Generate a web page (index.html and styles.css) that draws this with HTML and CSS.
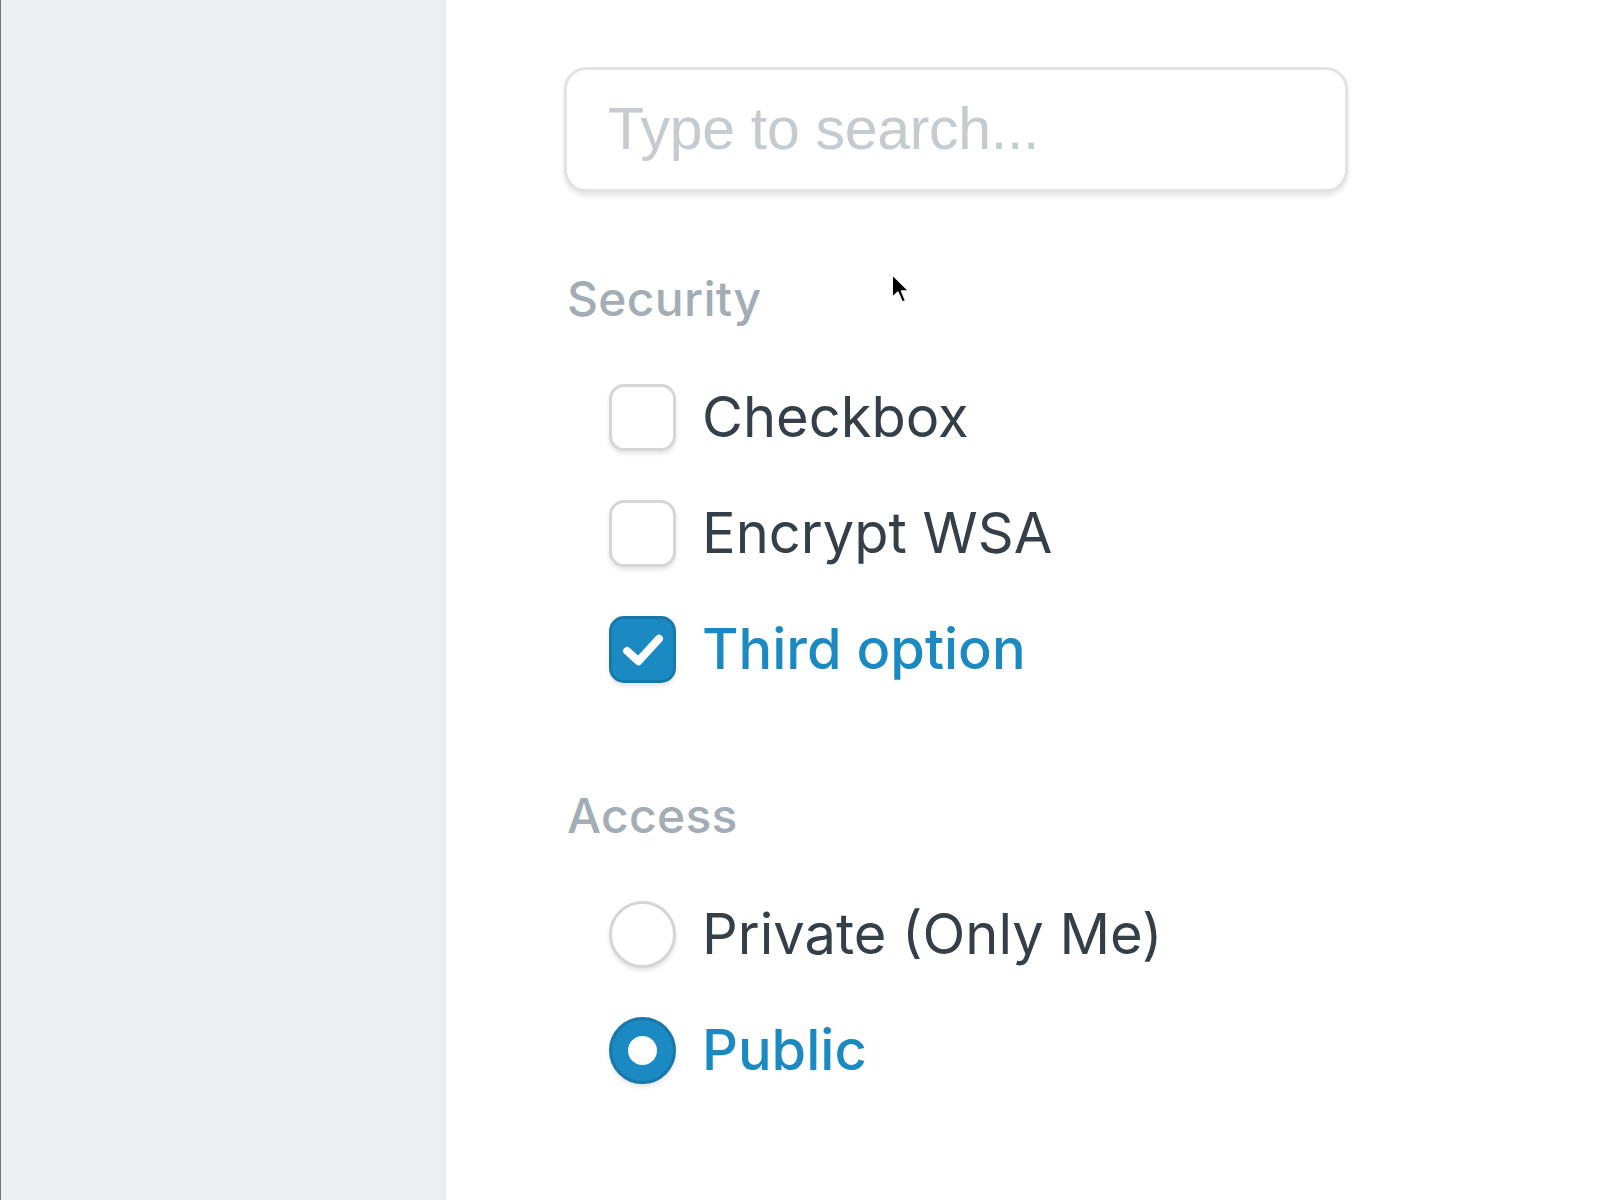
FILE: index.html
```html
<!DOCTYPE html>
<html lang="en">
<head>
  <meta charset="UTF-8">
  <title>Filters</title>
  <link rel="stylesheet" href="styles.css">
</head>
<body>
  <div class="layout">
    <aside class="sidebar"></aside>

    <main class="panel">
      <input type="text" class="search" placeholder="Type to search...">

      <section class="group">
        <h3 class="group-title">Security</h3>
        <label class="option">
          <span class="box"></span>
          <span class="text">Checkbox</span>
        </label>
        <label class="option">
          <span class="box"></span>
          <span class="text">Encrypt WSA</span>
        </label>
        <label class="option checked">
          <span class="box">
            <svg viewBox="0 0 64 64" width="60" height="60"><polyline points="15,34 27,45 49,21" fill="none" stroke="#fff" stroke-width="8.5" stroke-linecap="round" stroke-linejoin="round"/></svg>
          </span>
          <span class="text">Third option</span>
        </label>
      </section>

      <section class="group">
        <h3 class="group-title">Access</h3>
        <label class="option radio">
          <span class="box"></span>
          <span class="text">Private (Only Me)</span>
        </label>
        <label class="option radio checked">
          <span class="box"><span class="dot"></span></span>
          <span class="text">Public</span>
        </label>
      </section>

      <svg class="cursor" viewBox="0 0 22 34" width="22" height="34">
        <path d="M2 2 L2 26 L7.8 20.5 L12 30.5 L16 28.8 L11.8 19.2 L19.5 19.2 Z" fill="#000" stroke="#fff" stroke-width="2" stroke-linejoin="round"/>
      </svg>
    </main>
  </div>
</body>
</html>
```

FILE: styles.css
```css
body {
  margin: 0;
  background: #fff;
  font-family: Inter, "Noto Sans", sans-serif;
  color: #353f47;
}
.layout {
  display: flex;
  min-height: 1200px;
}
.sidebar {
  width: 445px;
  flex-shrink: 0;
  background-color: #eeeff3;
  border-left: 1px solid #767676;
  box-shadow: inset -9px 0 8px -7px rgba(0, 0, 0, 0.04);
}
.panel {
  position: relative;
  padding: 67px 0 0 118px;
  flex: 1;
}
.search {
  display: block;
  box-sizing: border-box;
  width: 784px;
  height: 125px;
  padding: 0 0 2px 41px;
  border: 3px solid #e3e3e3;
  border-radius: 22px;
  box-shadow: 0 4px 5px rgba(0, 0, 0, 0.1);
  font-family: "Liberation Sans", Arial, sans-serif;
  font-size: 59px;
  letter-spacing: -0.3px;
  color: #353f47;
  outline: none;
}
.search::placeholder {
  color: #c6cbd0;
}
.group {
  margin-top: 78px;
}
.group + .group {
  margin-top: 80px;
}
.group-title {
  margin: 0 0 31px 3px;
  height: 58px;
  line-height: 58px;
  font-size: 48px;
  font-weight: 500;
  color: #a3adb5;
  letter-spacing: 0.3px;
}
.option {
  display: flex;
  align-items: center;
  gap: 26px;
  height: 116px;
  padding-left: 45px;
  font-size: 56px;
  cursor: pointer;
}
.option .box {
  box-sizing: border-box;
  width: 67px;
  height: 67px;
  border: 3px solid #d6d6d6;
  border-radius: 15px;
  background: #fff;
  box-shadow: 0 3px 4px rgba(0, 0, 0, 0.1);
  display: flex;
  align-items: center;
  justify-content: center;
  flex-shrink: 0;
}
.option.radio .box {
  border-radius: 50%;
}
.option.checked .box {
  background-color: #1b8ac3;
  border-color: #1877ab;
}
.option.checked .text {
  color: #1b8ac3;
  font-weight: 500;
}
.dot {
  width: 29px;
  height: 29px;
  border-radius: 50%;
  background: #fff;
}
.cursor {
  position: absolute;
  left: 444px;
  top: 272px;
}
```
